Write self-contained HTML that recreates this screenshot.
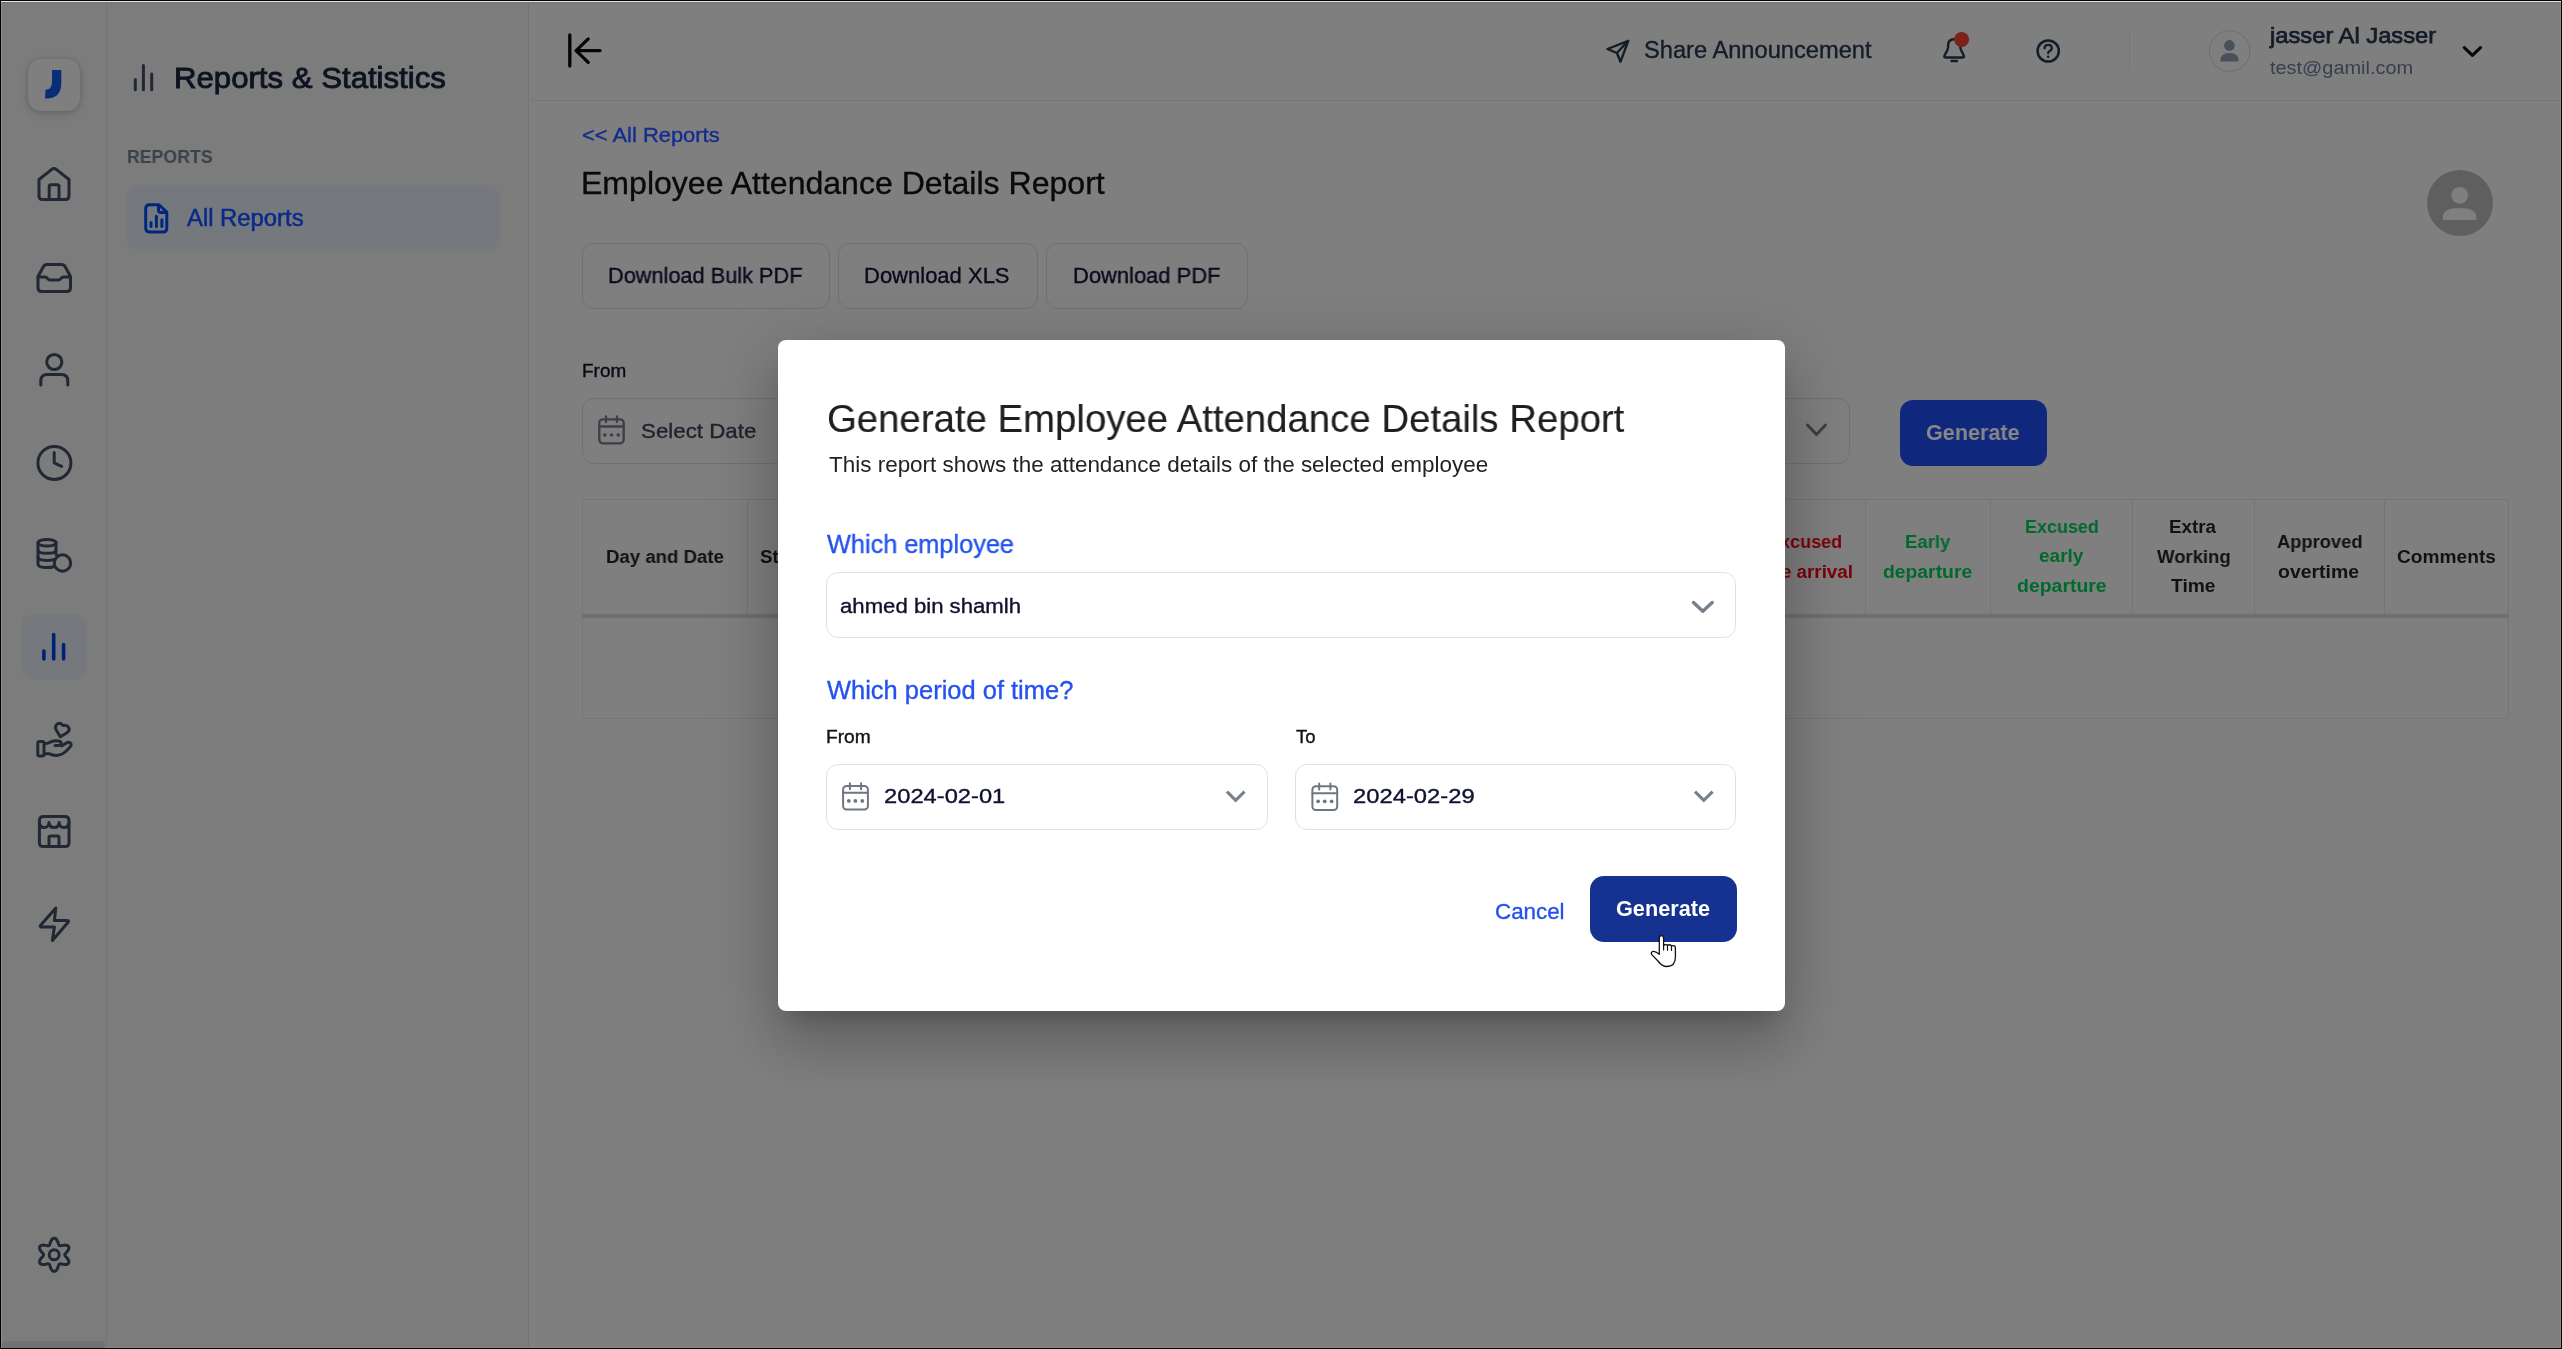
<!DOCTYPE html>
<html><head><meta charset="utf-8">
<style>
*{box-sizing:border-box;margin:0;padding:0}
html,body{width:2562px;height:1349px;overflow:hidden}
body{position:relative;background:#7f7f7f;font-family:"Liberation Sans",sans-serif}
.a{position:absolute}
.t{position:absolute;line-height:1;white-space:nowrap;transform-origin:0 0;will-change:transform}
svg{position:absolute;overflow:visible}
.ic{fill:none;stroke:#212833;stroke-width:3;stroke-linecap:round;stroke-linejoin:round}
.ob{position:absolute;border:1px solid #6e7176;border-radius:12px}
.mb{position:absolute;border:1px solid #dde2ea;border-radius:12px;background:#fff}
</style></head><body>
<!-- rail -->
<div class="a" style="left:0;top:0;width:107px;height:1349px;background:#7b7c7b;border-right:1px solid #747478"></div>
<!-- panel -->
<div class="a" style="left:107px;top:0;width:422px;height:1349px;background:#7b7c7b;border-right:1px solid #747578"></div>
<!-- header line -->
<div class="a" style="left:531px;top:100px;width:2031px;height:1px;background:#747579"></div>

<!-- logo -->
<div class="a" style="left:28px;top:59px;width:52px;height:52px;border-radius:13px;background:#7f7f7f;box-shadow:0 0 4px rgba(0,0,0,0.12),0 3px 8px rgba(0,0,0,0.14)"></div>
<svg style="left:0;top:0" width="107" height="130"><path d="M45 98.5 L45.5 89.8 Q52 89.5 52 82 L52 70 L61.3 70 L61.3 83 Q61.3 98.5 46.5 98.5 Z" fill="#0a2d78"/></svg>

<!-- rail icons -->
<svg style="left:33.5px;top:164px" width="40" height="40" class="ic"><path d="M5 15.5 L17.8 5.3 Q20 3.8 22.2 5.3 L35 15.5 L35 32 Q35 35.5 31.5 35.5 L8.5 35.5 Q5 35.5 5 32 Z"/><path d="M15.2 35.5 L15.2 22.5 Q15.2 20.7 17 20.7 L23.2 20.7 Q25 20.7 25 22.5 L25 35.5"/></svg>
<svg style="left:33.5px;top:258px" width="40" height="40" class="ic"><path d="M4 18.5 L9.3 8.8 Q10.5 6.5 13 6.5 L27.5 6.5 Q30 6.5 31.2 8.8 L36.5 18.5 L36.5 29.5 Q36.5 33.5 32.5 33.5 L8 33.5 Q4 33.5 4 29.5 Z"/><path d="M4 19 L11 19 Q12.5 19 13.5 20.5 Q14.5 22 16.5 22 L24 22 Q26 22 27 20.5 Q28 19 29.5 19 L36.5 19"/></svg>
<svg style="left:33.5px;top:350px" width="40" height="40" class="ic"><circle cx="20.3" cy="12" r="7.6"/><path d="M6.8 35 L6.8 31 Q6.8 24.5 13.3 24.5 L27.3 24.5 Q33.8 24.5 33.8 31 L33.8 35"/></svg>
<svg style="left:33.5px;top:443px" width="40" height="40" class="ic"><circle cx="20.4" cy="19.9" r="16.5"/><path d="M20.2 9.6 L20.2 19.8 L27.6 23.4"/></svg>
<svg style="left:33.5px;top:535px" width="40" height="40" class="ic"><ellipse cx="13" cy="7.7" rx="9" ry="3.3"/><path d="M4 7.7 L4 29 Q4 32.6 13 32.6 Q17 32.6 19.5 31.8"/><path d="M22 7.7 L22 19.5"/><path d="M4 14.9 Q4 18.3 13 18.3 Q22 18.3 22 14.9"/><path d="M4 22 Q4 25.4 13 25.4 Q17 25.4 19.5 24.6"/><circle cx="28.5" cy="28" r="8.2"/></svg>
<div class="a" style="left:21px;top:614px;width:66px;height:66px;border-radius:13px;background:#75787d"></div>
<svg style="left:0;top:600px" width="107" height="80"><path d="M43.9 51 L43.9 59 M53.7 34.5 L53.7 59 M63.6 44.5 L63.6 59" stroke="#00237a" stroke-width="3.6" stroke-linecap="round" fill="none"/></svg>
<svg style="left:33.5px;top:720px" width="40" height="40" class="ic"><rect x="3.8" y="21.5" width="6.2" height="14.5" rx="1.8"/><path d="M10.5 23.8 Q14 23.5 17.5 21.6 Q21.5 20 25.5 21.2 Q27.8 22.2 27 24.3 Q26.3 25.6 23.5 25.6 L21 25.6"/><path d="M10.5 33.7 L15 33.7 Q19.5 35.8 24 35.3 Q28.5 34.8 31.5 31.8 L36.3 26.8 Q38.2 24.5 36 22.8 Q34.3 21.7 32.6 22.9 L27.5 26"/><path d="M26.3 16.8 L22.5 10.5 Q20.2 6.3 23.3 4 Q26.5 2 29 5.6 Q32.5 4.4 34.5 7.3 Q36.3 10.6 32.6 13 Z"/></svg>
<svg style="left:33.5px;top:811px" width="40" height="40" class="ic"><path d="M5.4 9.5 Q5.4 5.4 9.5 5.4 L31 5.4 Q35 5.4 35 9.5 L35 31.5 Q35 35.6 31 35.6 L9.5 35.6 Q5.4 35.6 5.4 31.5 Z"/><path d="M5.4 11.5 Q6 16.6 10.2 16.6 Q14.6 16.6 15 11.5 Q15.5 16.6 20.1 16.6 Q24.7 16.6 25.2 11.5 Q25.6 16.6 30 16.6 Q34.5 16.6 35 11.5"/><path d="M15 35.6 L15 26.6 Q15 24.9 16.8 24.9 L23.3 24.9 Q25 24.9 25 26.6 L25 35.6"/></svg>
<svg style="left:33.5px;top:904px" width="40" height="40" class="ic"><path d="M21.8 3.9 L6.6 21.3 Q5.6 23 7.6 23 L20.4 23 L18.4 36.4 L34.1 18.3 Q35.2 16.4 33.2 16.4 L20.4 16.4 Z"/></svg>
<svg style="left:33.5px;top:1235px" width="40" height="40" class="ic"><path d="M30.80 19.80 L30.93 19.24 L31.31 18.63 L31.89 17.95 L32.60 17.17 L33.34 16.28 L34.02 15.31 L34.54 14.29 L34.84 13.28 L34.86 12.33 L34.58 11.50 L34.00 10.84 L33.17 10.38 L32.14 10.13 L31.00 10.08 L29.82 10.18 L28.68 10.38 L27.65 10.60 L26.77 10.76 L26.05 10.79 L25.50 10.62 L25.08 10.22 L24.74 9.59 L24.44 8.75 L24.12 7.75 L23.72 6.66 L23.22 5.59 L22.60 4.63 L21.88 3.86 L21.06 3.37 L20.20 3.20 L19.34 3.37 L18.52 3.86 L17.80 4.63 L17.18 5.59 L16.68 6.66 L16.28 7.75 L15.96 8.75 L15.66 9.59 L15.32 10.22 L14.90 10.62 L14.35 10.79 L13.63 10.76 L12.75 10.60 L11.72 10.38 L10.58 10.18 L9.40 10.08 L8.26 10.13 L7.23 10.38 L6.40 10.84 L5.82 11.50 L5.54 12.33 L5.56 13.28 L5.86 14.29 L6.38 15.31 L7.06 16.28 L7.80 17.17 L8.51 17.95 L9.09 18.63 L9.47 19.24 L9.60 19.80 L9.47 20.36 L9.09 20.97 L8.51 21.65 L7.80 22.43 L7.06 23.32 L6.38 24.29 L5.86 25.31 L5.56 26.32 L5.54 27.27 L5.82 28.10 L6.40 28.76 L7.23 29.22 L8.26 29.47 L9.40 29.52 L10.58 29.42 L11.72 29.22 L12.75 29.00 L13.63 28.84 L14.35 28.81 L14.90 28.98 L15.32 29.38 L15.66 30.01 L15.96 30.85 L16.28 31.85 L16.68 32.94 L17.18 34.01 L17.80 34.97 L18.52 35.74 L19.34 36.23 L20.20 36.40 L21.06 36.23 L21.88 35.74 L22.60 34.97 L23.22 34.01 L23.72 32.94 L24.12 31.85 L24.44 30.85 L24.74 30.01 L25.08 29.38 L25.50 28.98 L26.05 28.81 L26.77 28.84 L27.65 29.00 L28.68 29.22 L29.82 29.42 L31.00 29.52 L32.14 29.47 L33.17 29.22 L34.00 28.76 L34.58 28.10 L34.86 27.27 L34.84 26.32 L34.54 25.31 L34.02 24.29 L33.34 23.32 L32.60 22.43 L31.89 21.65 L31.31 20.97 L30.93 20.36 L30.80 19.80Z"/><circle cx="20.2" cy="19.8" r="5"/></svg>
<!-- rail bottom scrollbar -->

<!-- panel content -->
<svg style="left:125px;top:55px" width="50" height="45"><path d="M10.3 24.5 L10.3 34.7 M18.4 10.5 L18.4 34.7 M26.7 19 L26.7 34.7" stroke="#212833" stroke-width="3" stroke-linecap="round" fill="none"/></svg>
<div class="a" style="left:127px;top:185px;width:373px;height:66px;border-radius:13px;background:#75787d"></div>
<svg style="left:135px;top:195px" width="45" height="45"><path d="M14.7 9.7 L23.7 9.7 L31.8 17.2 L31.8 33 Q31.8 37 27.8 37 L14.7 37 Q10.7 37 10.7 33 L10.7 13.7 Q10.7 9.7 14.7 9.7 Z" stroke="#00277f" stroke-width="3" fill="none" stroke-linejoin="round"/><path d="M23.5 10 L23.5 15.3 Q23.5 17.5 25.7 17.5 L31.5 17.5" stroke="#00277f" stroke-width="3" fill="none" stroke-linejoin="round"/><path d="M16 27.5 L16 31.5 M21.4 21.3 L21.4 31.5 M26.9 24.8 L26.9 31.5" stroke="#00277f" stroke-width="3" stroke-linecap="round"/></svg>

<!-- header icons -->
<svg style="left:0;top:0" width="2562" height="100">
 <path d="M569.8 35 L569.8 66.1 M576.1 50.6 L600 50.6 M588.2 38.9 L576.1 50.6 L588.2 62.4" stroke="#050505" stroke-width="3.3" stroke-linecap="round" stroke-linejoin="round" fill="none"/>
 <path d="M1628.3 40.8 L1607.5 49 L1616.9 53 L1620.5 61.7 Z M1616.9 53 L1628.3 40.8" stroke="#141c28" stroke-width="2.4" stroke-linejoin="round" fill="none"/>
 <path d="M1945.2 57.5 L1963.2 57.5 Q1964.5 57 1963.8 55.5 L1961 50 Q1960.2 48 1960.2 45.5 L1960.2 45 Q1960.2 39.3 1954.2 39.3 Q1948.2 39.3 1948.2 45 L1948.2 45.5 Q1948.2 48 1947.4 50 L1944.6 55.5 Q1944 57 1945.2 57.5 Z" stroke="#141c28" stroke-width="2.4" stroke-linejoin="round" fill="none"/>
 <path d="M1951.5 61 L1957 61" stroke="#141c28" stroke-width="2.4" stroke-linecap="round"/>
 <circle cx="1961.6" cy="39.5" r="7.5" fill="#7d2219"/>
 <circle cx="2048.2" cy="51" r="10.6" stroke="#141c28" stroke-width="2.5" fill="none"/>
 <path d="M2044.6 48.3 Q2044.6 44.8 2048.2 44.8 Q2051.8 44.8 2051.8 48 Q2051.8 50.2 2049.5 51 Q2048.2 51.6 2048.2 53.2" stroke="#141c28" stroke-width="2.3" stroke-linecap="round" fill="none"/>
 <circle cx="2048.2" cy="56.8" r="1.3" fill="#141c28"/>
 <path d="M2129.5 31 L2129.5 71" stroke="#717479" stroke-width="1"/>
 <circle cx="2229.6" cy="51" r="20.3" stroke="#6a6e74" stroke-width="1" fill="none"/>
 <circle cx="2229.4" cy="45.4" r="5.3" fill="#4a505a"/>
 <path d="M2220.3 61.5 L2238.6 61.5 Q2239.2 53.2 2229.5 53 Q2219.8 53.2 2220.3 61.5 Z" fill="#4a505a"/>
 <path d="M2464.3 47.6 L2472.4 55.4 L2480.5 47.6" stroke="#050505" stroke-width="3" stroke-linecap="round" stroke-linejoin="round" fill="none"/>
</svg>

<!-- big avatar -->
<svg style="left:0;top:0" width="2562" height="300">
 <circle cx="2460" cy="203" r="33" fill="#5f5f5f"/>
 <circle cx="2459.7" cy="195.3" r="8.4" fill="#7f7f7f"/>
 <path d="M2442.8 220 L2476.3 220 L2476.3 217 Q2476.3 208 2459.5 208 Q2442.8 208 2442.8 217 Z" fill="#7f7f7f"/>
</svg>

<!-- download buttons -->
<div class="ob" style="left:582px;top:243px;width:248px;height:66px"></div>
<div class="ob" style="left:838px;top:243px;width:200px;height:66px"></div>
<div class="ob" style="left:1046px;top:243px;width:202px;height:66px"></div>

<!-- bg form -->
<div class="ob" style="left:582px;top:398px;width:500px;height:66px"></div>
<svg style="left:0;top:0" width="2562" height="500">
 <g stroke="#3c4046" fill="none" stroke-width="2.3" stroke-linecap="round">
  <rect x="599.3" y="419.3" width="24.4" height="24" rx="3.5"/>
  <path d="M599.3 426.5 L623.7 426.5 M606 416.5 L606 422 M617 416.5 L617 422"/>
 </g>
 <g fill="#3c4046"><circle cx="604.8" cy="435" r="1.8"/><circle cx="611.5" cy="435" r="1.8"/><circle cx="618.2" cy="435" r="1.8"/></g>
 <path d="M1807.5 425 L1816.5 434.5 L1825.5 425" stroke="#3c4046" stroke-width="3" stroke-linecap="round" stroke-linejoin="round" fill="none"/>
</svg>
<div class="ob" style="left:1500px;top:398px;width:350px;height:66px"></div>
<div class="a" style="left:1900px;top:400px;width:147px;height:66px;border-radius:13px;background:#0f287d"></div>

<!-- table -->
<div class="a" style="left:582px;top:499px;width:1927px;height:220px;border:1px solid #757575"></div>
<div class="a" style="left:582px;top:614px;width:1927px;height:4px;background:#6e6f73"></div>
<div class="a" style="left:747px;top:499px;width:1px;height:115px;background:#757575"></div>
<div class="a" style="left:1865px;top:499px;width:1px;height:115px;background:#757575"></div>
<div class="a" style="left:1990px;top:499px;width:1px;height:115px;background:#757575"></div>
<div class="a" style="left:2132px;top:499px;width:1px;height:115px;background:#757575"></div>
<div class="a" style="left:2254px;top:499px;width:1px;height:115px;background:#757575"></div>
<div class="a" style="left:2384px;top:499px;width:1px;height:115px;background:#757575"></div>

<div class="t" style="left:173.52px;top:63.00px;font-size:30px;font-weight:400;color:#0d1320;transform:scaleX(1.0386);-webkit-text-stroke:0.9px currentColor;">Reports &amp; Statistics</div>
<div class="t" style="left:126.76px;top:148.00px;font-size:18.8px;font-weight:700;color:#3b414d;transform:scaleX(0.9438);">REPORTS</div>
<div class="t" style="left:187.00px;top:207.00px;font-size:23.3px;font-weight:400;color:#0a2a8a;transform:scaleX(1.0230);-webkit-text-stroke:0.5px currentColor;">All Reports</div>
<div class="t" style="left:1644.38px;top:39.00px;font-size:23.3px;font-weight:400;color:#141c28;transform:scaleX(1.0157);-webkit-text-stroke:0.35px currentColor;">Share Announcement</div>
<div class="t" style="left:2270.25px;top:25.00px;font-size:22.6px;font-weight:400;color:#141c28;transform:scaleX(1.0503);-webkit-text-stroke:0.75px currentColor;">jasser Al Jasser</div>
<div class="t" style="left:2269.50px;top:59.00px;font-size:18.6px;font-weight:400;color:#373e4e;transform:scaleX(1.0714);">test@gamil.com</div>
<div class="t" style="left:582.16px;top:124.00px;font-size:21px;font-weight:400;color:#122c90;transform:scaleX(1.0431);-webkit-text-stroke:0.35px currentColor;">&lt;&lt; All Reports</div>
<div class="t" style="left:580.93px;top:169.00px;font-size:30.9px;font-weight:400;color:#0a0a0a;transform:scaleX(1.0374);-webkit-text-stroke:0.35px currentColor;">Employee Attendance Details Report</div>
<div class="t" style="left:608.02px;top:265.00px;font-size:22px;font-weight:400;color:#0a0a1e;transform:scaleX(0.9876);-webkit-text-stroke:0.35px currentColor;">Download Bulk PDF</div>
<div class="t" style="left:864.40px;top:265.00px;font-size:22px;font-weight:400;color:#0a0a1e;-webkit-text-stroke:0.35px currentColor;">Download XLS</div>
<div class="t" style="left:1073.01px;top:265.00px;font-size:22px;font-weight:400;color:#0a0a1e;transform:scaleX(0.9966);-webkit-text-stroke:0.35px currentColor;">Download PDF</div>
<div class="t" style="left:581.98px;top:362.00px;font-size:18.5px;font-weight:400;color:#0a0a14;transform:scaleX(1.0244);-webkit-text-stroke:0.35px currentColor;">From</div>
<div class="t" style="left:640.54px;top:420.00px;font-size:21px;font-weight:400;color:#22222e;transform:scaleX(1.0626);-webkit-text-stroke:0.35px currentColor;">Select Date</div>
<div class="t" style="left:1926.01px;top:422.00px;font-size:21.7px;font-weight:700;color:#888888;transform:scaleX(0.9946);">Generate</div>
<div class="t" style="left:606.01px;top:548.00px;font-size:18.8px;font-weight:700;color:#121212;transform:scaleX(0.9915);">Day and Date</div>
<div class="t" style="left:760.00px;top:548.00px;font-size:18.8px;font-weight:700;color:#121212;">Status</div>
<div class="t" style="left:1768.14px;top:533.00px;font-size:18.8px;font-weight:700;color:#7a0008;transform:scaleX(0.9600);">Excused</div>
<div class="t" style="left:1758.80px;top:563.00px;font-size:18.8px;font-weight:700;color:#7a0008;">late arrival</div>
<div class="t" style="left:1905.21px;top:533.00px;font-size:18.8px;font-weight:700;color:#006a2d;transform:scaleX(0.9867);">Early</div>
<div class="t" style="left:1883.47px;top:563.00px;font-size:18.8px;font-weight:700;color:#006a2d;transform:scaleX(1.0294);">departure</div>
<div class="t" style="left:2024.84px;top:518.00px;font-size:18.8px;font-weight:700;color:#006a2d;transform:scaleX(0.9560);">Excused</div>
<div class="t" style="left:2038.69px;top:547.00px;font-size:18.8px;font-weight:700;color:#006a2d;transform:scaleX(1.0116);">early</div>
<div class="t" style="left:2016.76px;top:577.00px;font-size:18.8px;font-weight:700;color:#006a2d;transform:scaleX(1.0353);">departure</div>
<div class="t" style="left:2169.30px;top:518.00px;font-size:18.8px;font-weight:700;color:#121212;transform:scaleX(1.0022);">Extra</div>
<div class="t" style="left:2157.00px;top:548.00px;font-size:18.8px;font-weight:700;color:#121212;transform:scaleX(0.9865);">Working</div>
<div class="t" style="left:2171.30px;top:577.00px;font-size:18.8px;font-weight:700;color:#121212;transform:scaleX(1.0233);">Time</div>
<div class="t" style="left:2276.50px;top:533.00px;font-size:18.8px;font-weight:700;color:#121212;transform:scaleX(0.9759);">Approved</div>
<div class="t" style="left:2278.46px;top:563.00px;font-size:18.8px;font-weight:700;color:#121212;transform:scaleX(1.0351);">overtime</div>
<div class="t" style="left:2397.18px;top:548.00px;font-size:18.8px;font-weight:700;color:#121212;transform:scaleX(1.0200);">Comments</div>

<!-- modal -->
<div class="a" style="left:778px;top:340px;width:1007px;height:671px;border-radius:8px;background:#fff;box-shadow:0px 16.5px 22.5px -10.5px rgba(0,0,0,0.2),0px 36px 57px 4.5px rgba(0,0,0,0.14),0px 13.5px 69px 12px rgba(0,0,0,0.12)"></div>
<div class="mb" style="left:826px;top:572px;width:910px;height:66px"></div>
<div class="mb" style="left:826px;top:764px;width:442px;height:66px"></div>
<div class="mb" style="left:1295px;top:764px;width:441px;height:66px"></div>
<svg style="left:0;top:0" width="2562" height="1000">
 <path d="M1693.5 602.5 L1702.8 611.3 L1712.2 602.5" stroke="#78808a" stroke-width="3.4" stroke-linecap="round" stroke-linejoin="round" fill="none"/>
 <path d="M1226.9 791.6 L1235.7 800.4 L1244.5 791.6" stroke="#78808a" stroke-width="3.1" stroke-linecap="butt" stroke-linejoin="miter" fill="none"/>
 <path d="M1695 791.6 L1703.8 800.4 L1712.6 791.6" stroke="#78808a" stroke-width="3.1" stroke-linecap="butt" stroke-linejoin="miter" fill="none"/>
 <g stroke="#6e7681" fill="none" stroke-width="2" stroke-linecap="round">
  <rect x="843.1" y="785.9" width="24.8" height="23.7" rx="3.5"/>
  <path d="M843.1 792.8 L867.9 792.8 M849.9 783.2 L849.9 789.2 M861.1 783.2 L861.1 789.2"/>
  <rect x="1312.4" y="786.3" width="24.8" height="23.7" rx="3.5"/>
  <path d="M1312.4 793.2 L1337.2 793.2 M1319.2 783.6 L1319.2 789.6 M1330.4 783.6 L1330.4 789.6"/>
 </g>
 <g fill="#6e7681"><circle cx="848.8" cy="800.9" r="1.9"/><circle cx="855.4" cy="800.9" r="1.9"/><circle cx="862.3" cy="800.9" r="1.9"/>
 <circle cx="1318.1" cy="801.3" r="1.9"/><circle cx="1324.7" cy="801.3" r="1.9"/><circle cx="1331.6" cy="801.3" r="1.9"/></g>
</svg>
<div class="a" style="left:1590px;top:875.5px;width:147px;height:66.5px;border-radius:14px;background:#163291"></div>

<div class="t" style="left:827.02px;top:400.00px;font-size:38.7px;font-weight:400;color:#1f1f1f;transform:scaleX(0.9913);-webkit-text-stroke:0.15px currentColor;">Generate Employee Attendance Details Report</div>
<div class="t" style="left:829.00px;top:455.00px;font-size:21.3px;font-weight:400;color:#222222;transform:scaleX(1.0545);">This report shows the attendance details of the selected employee</div>
<div class="t" style="left:827.00px;top:532.00px;font-size:25.5px;font-weight:400;color:#2352ef;transform:scaleX(0.9915);-webkit-text-stroke:0.35px currentColor;">Which employee</div>
<div class="t" style="left:839.52px;top:596.00px;font-size:20.5px;font-weight:400;color:#10102e;transform:scaleX(1.0806);-webkit-text-stroke:0.35px currentColor;">ahmed bin shamlh</div>
<div class="t" style="left:827.00px;top:678.00px;font-size:24.9px;font-weight:400;color:#2352ef;transform:scaleX(1.0233);-webkit-text-stroke:0.35px currentColor;">Which period of time?</div>
<div class="t" style="left:826.16px;top:728.00px;font-size:18.5px;font-weight:400;color:#111111;transform:scaleX(1.0366);-webkit-text-stroke:0.35px currentColor;">From</div>
<div class="t" style="left:1295.50px;top:728.00px;font-size:18.5px;font-weight:400;color:#111111;-webkit-text-stroke:0.35px currentColor;">To</div>
<div class="t" style="left:884.36px;top:786.00px;font-size:20.9px;font-weight:400;color:#0f1130;transform:scaleX(1.1352);-webkit-text-stroke:0.35px currentColor;">2024-02-01</div>
<div class="t" style="left:1352.86px;top:786.00px;font-size:20.9px;font-weight:400;color:#0f1130;transform:scaleX(1.1381);-webkit-text-stroke:0.35px currentColor;">2024-02-29</div>
<div class="t" style="left:1494.97px;top:901.00px;font-size:21.7px;font-weight:400;color:#2352ef;transform:scaleX(1.0308);-webkit-text-stroke:0.35px currentColor;">Cancel</div>
<div class="t" style="left:1616.00px;top:898.00px;font-size:21.7px;font-weight:700;color:#ffffff;">Generate</div>

<!-- cursor -->
<svg style="left:0;top:0" width="2562" height="1000">
 <path d="M1659.3 954.3 L1659.3 938 Q1659.3 935.6 1661.5 935.6 Q1663.6 935.6 1663.6 938 L1663.6 945.5 Q1665.5 943.8 1667.5 945.2 Q1669.5 944 1671.5 945.8 Q1675.4 944.8 1675.4 948 L1675.4 957 Q1675.4 966.5 1666.7 966.5 Q1662 966.5 1658 961 L1651.8 954.6 Q1650.5 952.5 1652.5 951.6 Q1655 950.8 1659.3 954.3 Z" fill="#fff" stroke="#111" stroke-width="1.3" stroke-linejoin="round"/>
 <path d="M1663.6 945.5 L1663.6 950 M1667.5 945.2 L1667.5 950.3 M1671.5 945.8 L1671.5 950.5" stroke="#111" stroke-width="1.2" stroke-linecap="round"/>
</svg>

<!-- frame -->
<div class="a" style="left:0;top:0;width:2562px;height:1349px;border:1px solid #000"></div>
<div class="a" style="left:1px;top:1px;width:2560px;height:1px;background:#e6e8e6"></div>
<div class="a" style="left:1px;top:2px;width:2560px;height:1px;background:#737573"></div>
<div class="a" style="left:1px;top:2px;width:1px;height:1346px;background:#8a8c8a"></div>
<div class="a" style="left:2560px;top:2px;width:1px;height:1346px;background:#898989"></div>
<div class="a" style="left:1px;top:1347px;width:2560px;height:1px;background:#898989"></div>
<div class="a" style="left:2px;top:1341px;width:103px;height:7px;border-radius:4px 4px 0 0;background:#717276"></div>
</body></html>
